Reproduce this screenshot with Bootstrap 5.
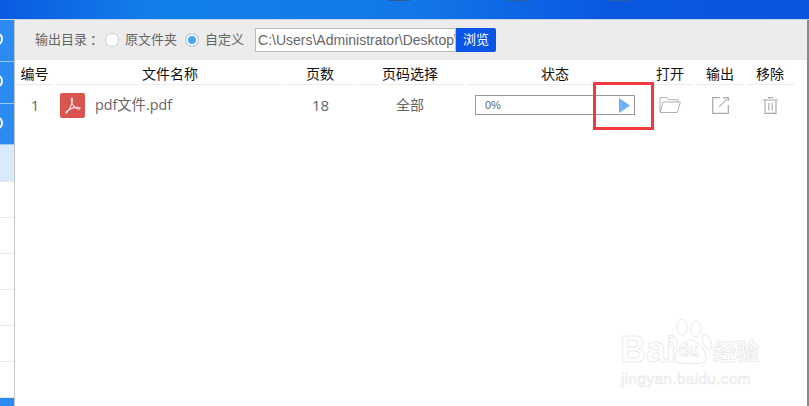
<!DOCTYPE html>
<html lang="zh-CN">
  <head>
    <meta charset="UTF-8" />
    <meta name="viewport" content="width=device-width, initial-scale=1.0" />
    <title>PDF</title>
    <link href="https://cdn.jsdelivr.net/npm/bootstrap@5.3.0/dist/css/bootstrap.min.css" rel="stylesheet" />
    <style>
      html, body { height: 406px; overflow: hidden; }
      body {
        position: relative;
        background: #fff;
        font-family: "Liberation Sans", "Noto Sans CJK SC", sans-serif;
        font-size: 13px;
        color: #666;
      }
      .top-strip {
        height: 19px;
        position: relative;
        background: linear-gradient(90deg, #0a5be0 0%, #1380ea 20%, #1278e8 50%, #0a58e0 75%, #0a55de 100%);
        border-bottom: 1px solid #c8d4e4;
        box-sizing: content-box;
      }
      .strip-tick { position: absolute; top: 0; width: 22px; height: 1px; background: #2a5f9e; }
      .tick-a { left: 388px; }
      .tick-b { left: 508px; }
      .tick-c { left: 608px; }
      .app-body { height: 386px; border-right: 2px solid #8a8a8a; }
      .side-rail { width: 15px; border-right: 1px solid #c4c4c4; flex: none; }
      .rail-blue { height: 42px; background: #2a8cf0; border-bottom: 1px solid #9cc8f6; position: relative; overflow: hidden; }
      .rail-blue.tall { height: 41px; }
      .rail-blue i {
        position: absolute; left: -7px; top: 13px; width: 10px; height: 12px;
        border: 2px solid #fff; border-radius: 50%;
      }
      .rail-active { height: 37px; background: #d8eafc; border-bottom: 1px solid #e6e6e6; }
      .rail-item { height: 36px; background: #fff; border-bottom: 1px solid #e6e6e6; }
      .rail-end { height: 9px; background: #2a8cf0; }
      .tool-bar { height: 40px; background: #ececec; padding-left: 20px; }
      .dir-label { width: 70px; }
      .dir-colon { margin-left: 3px; }
      .radio-dot {
        width: 14px; height: 14px; border: 1px solid #ccc; border-radius: 50%;
        background: #fff; flex: none; margin-right: 6px;
      }
      .radio-dot.on { background: #45a5f5; box-shadow: inset 0 0 0 2px #fff; }
      .radio-text { width: 60px; }
      .path-input {
        width: 201px; height: 24px; margin-left: 11px; padding: 0 2px;
        border: 1px solid #bbb; background: #fff; color: #666;
        font-size: 14px; line-height: 22px;
        white-space: nowrap; overflow: hidden;
      }
      .browse-btn {
        width: 40px; height: 24px; padding: 0; border: 0; border-radius: 0 2px 2px 0;
        background: #0a55e6; color: #fff; font-size: 13px; line-height: 24px;
      }
      .task-grid {
        display: grid;
        grid-template-columns: 39px 228px 68px 108px 178px 48px 48px 48px;
        column-gap: 2px;
      }
      .head-cell {
        height: 25px; line-height: 28px; text-align: center; color: #111; font-size: 14px;
        border-bottom: 1px solid #ececec;
      }
      .body-cell { height: 40px; color: #666; font-size: 14px; }
      .num-cell { padding-left: 1px; font-family: "Open Sans", sans-serif; font-size: 15px; }
      .file-name { font-family: "Open Sans", "Noto Sans CJK SC", sans-serif; font-size: 14.3px; }
      .pdf-badge {
        width: 25px; height: 25px; background: #d9534f; border-radius: 2px; margin-left: 4px; margin-right: 10px; flex: none;
      }
      .bar-box {
        width: 160px; height: 20px; margin-left: 9px; padding-left: 9px; padding-right: 4px;
        border: 1px solid #999; font-size: 11px;
      }
      .red-mark {
        position: absolute; left: 593px; top: 82px; width: 61px; height: 48px;
        border: 3px solid #f23a3a; pointer-events: none;
      }
      .wm-box {
        position: absolute; left: 620px; top: 318px; width: 145px; height: 80px; color: transparent;
        -webkit-text-stroke: 1px #ececec; pointer-events: none;
      }
      .wm-bai { position: absolute; left: 0; top: 14px; font: 700 36px/36px "Liberation Sans", sans-serif; }
      .wm-cn { position: absolute; left: 93px; top: 19px; font: 700 23px/26px "Noto Sans CJK SC", sans-serif; white-space: nowrap; }
      .wm-url {
        position: absolute; left: 1px; top: 51px; font: 400 15.5px/20px "Liberation Sans", sans-serif;
        white-space: nowrap; letter-spacing: .3px; -webkit-text-stroke: .6px #e6e6e6;
      }
      .wm-paw { position: absolute; left: 48px; top: 0; }
    </style>
  </head>
  <body>
    <div class="top-strip">
      <span class="strip-tick tick-a"></span>
      <span class="strip-tick tick-b"></span>
      <span class="strip-tick tick-c"></span>
    </div>
    <div class="d-flex app-body">
      <div class="side-rail">
        <div class="rail-blue"><i></i></div>
        <div class="rail-blue"><i></i></div>
        <div class="rail-blue tall"><i></i></div>
        <div class="rail-active"></div>
        <div class="rail-item"></div>
        <div class="rail-item"></div>
        <div class="rail-item"></div>
        <div class="rail-item"></div>
        <div class="rail-item"></div>
        <div class="rail-item"></div>
        <div class="rail-end"></div>
      </div>
      <div class="flex-grow-1">
        <div class="tool-bar d-flex align-items-center">
          <span class="dir-label">输出目录<span class="dir-colon">：</span></span>
          <span class="radio-dot"></span><span class="radio-text">原文件夹</span>
          <span class="radio-dot on"></span><span>自定义</span>
          <div class="path-input">C:\Users\Administrator\Desktop\</div>
          <button type="button" class="btn browse-btn">浏览</button>
        </div>
        <div class="task-grid">
          <div class="head-cell">编号</div>
          <div class="head-cell">文件名称</div>
          <div class="head-cell">页数</div>
          <div class="head-cell">页码选择</div>
          <div class="head-cell">状态</div>
          <div class="head-cell">打开</div>
          <div class="head-cell">输出</div>
          <div class="head-cell">移除</div>

          <div class="body-cell num-cell d-flex align-items-center justify-content-center">1</div>
          <div class="body-cell d-flex align-items-center">
            <div class="pdf-badge d-flex align-items-center justify-content-center">
              <svg width="19" height="19" viewBox="0 0 19 19" fill="none" stroke="#f6dcdb" stroke-width="1.2">
                <path d="M9 2c-1 0-1 2 0 5 1 3 3 5 6 6 2 .5 3-1 1-1.500-4-.7-9 1-13 4.500-1 1 0 1.500 1 .5 2.500-3 4.500-7 5.500-12 0-2-.2-2.500-.5-2.500z" />
              </svg>
            </div>
            <span class="file-name">pdf文件.pdf</span>
          </div>
          <div class="body-cell num-cell d-flex align-items-center justify-content-center">18</div>
          <div class="body-cell d-flex align-items-center justify-content-center">全部</div>
          <div class="body-cell d-flex align-items-center">
            <div class="bar-box d-flex align-items-center justify-content-between">
              <span>0%</span>
              <svg width="11" height="15" viewBox="0 0 11 15"><path d="M0 0 L11 7.500 L0 15z" fill="#6fb0fa" /></svg>
            </div>
          </div>
          <div class="body-cell d-flex align-items-center justify-content-center">
            <svg width="22" height="16" viewBox="0 0 22 16" fill="none" stroke="#b0b0b0" stroke-width="1">
              <path d="M3 15.500H1V.700h7l1.500 2H19V5" />
              <path d="M1.200 15.500 4 5h17.300l-3 10.500z" />
            </svg>
          </div>
          <div class="body-cell d-flex align-items-center justify-content-center">
            <svg width="17" height="17" viewBox="0 0 17 17" fill="none" stroke="#a8a8a8" stroke-width="1.2">
              <path d="M8 .700H.700v15.600h15.600V8" />
              <path d="M7 10 15.500 1.500" stroke="#bdbdbd" />
              <path d="M11 .700h5.300V4" />
            </svg>
          </div>
          <div class="body-cell d-flex align-items-center justify-content-center">
            <svg width="15" height="17" viewBox="0 0 15 17" fill="none" stroke="#a8a8a8" stroke-width="1.1">
              <path d="M0 3h15M5 .600h5" />
              <path d="M2 3v13.400h11V3" />
              <path d="M5.800 6v7.500M9.200 6v7.500" />
            </svg>
          </div>
        </div>
      </div>
    </div>

    <div class="red-mark"></div>

    <div class="wm-box">
      <svg class="wm-paw" width="46" height="48" viewBox="0 0 46 48" fill="none" stroke="#e9e9e9" stroke-width="1">
        <ellipse cx="5" cy="24" rx="4" ry="7" transform="rotate(-15 5 24)" />
        <ellipse cx="14" cy="9" rx="5" ry="8" />
        <ellipse cx="28" cy="11" rx="5" ry="8" />
        <ellipse cx="39" cy="24" rx="4" ry="8" transform="rotate(-25 39 24)" />
        <path d="M7 40c0-7 9-18 16-18s15 11 15 18c0 6-7 6-15 5-8 1-16 1-16-5z" />
        <text x="11" y="38" font-family="Liberation Sans" font-size="16" font-weight="700" stroke-width=".8" fill="none">du</text>
      </svg>
      <span class="wm-bai">Bai</span>
      <span class="wm-cn">经验</span>
      <span class="wm-url">jingyan.baidu.com</span>
    </div>

    <script src="https://cdn.jsdelivr.net/npm/bootstrap@5.3.0/dist/js/bootstrap.bundle.min.js"></script>
  </body>
</html>
